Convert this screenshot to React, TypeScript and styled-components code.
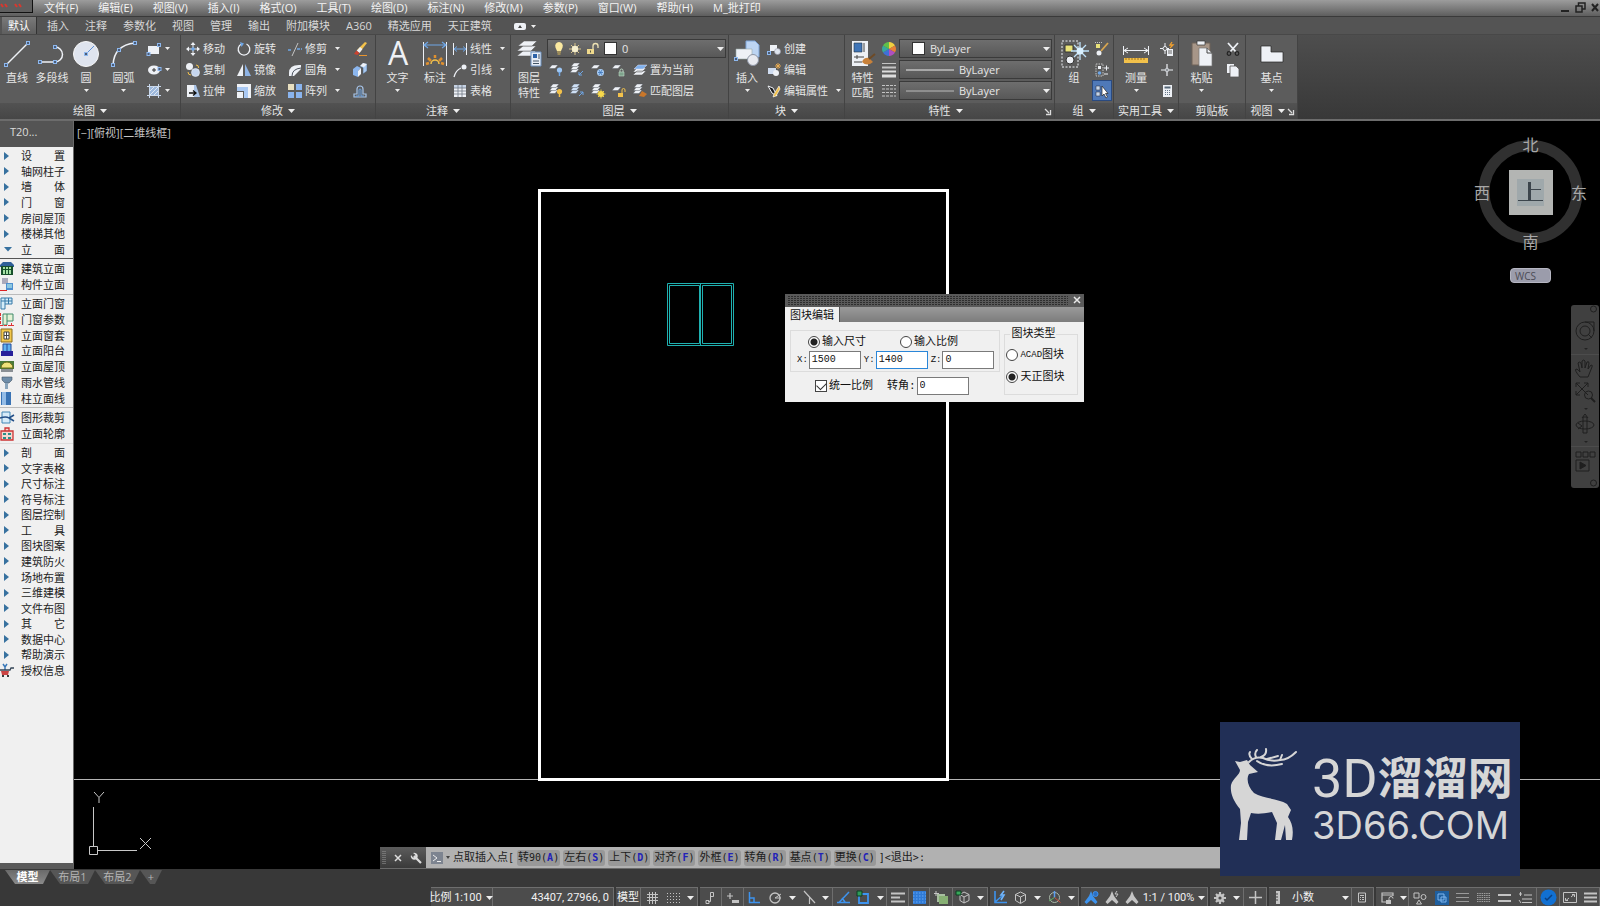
import React from 'react';
import styled, { createGlobalStyle, css } from 'styled-components';

const ui = `'Open Sans', 'Noto Sans CJK SC', sans-serif`;
const mono = `'DejaVu Sans Mono', 'Noto Sans CJK SC', monospace`;
const song = `'Liberation Mono', 'Noto Sans CJK SC', monospace`;
const narrow = `Roboto, 'Noto Sans CJK SC', sans-serif`;

const GlobalStyle = createGlobalStyle`
  * { box-sizing: border-box; }
  body { margin: 0; background: #383838; font-family: ${ui}; font-size: 11px; overflow: hidden; }
  button, select, input { font: inherit; color: inherit; }
  button { background: none; border: 0; padding: 0; margin: 0; }
  ul { list-style: none; margin: 0; padding: 0; }
`;

/* ---------- shared ---------- */
const Svg = styled.svg`
  display: block;
  flex: none;
  overflow: visible;
`;
const W = '#eef1f6';
const B = '#6ea6e6';
const Y = '#f2c14b';
const G = '#c4c4c4';
const SB = '#3d93ee';

const Sheet = ({ x = 0, y = 0, f = W }: { x?: number; y?: number; f?: string }) => (
  <path d={`M${x + 3} ${y}h6l-3 3.500h-6z`} fill={f} stroke="#4a4f57" strokeWidth=".4" />
);
const Stack = ({ f = W }: { f?: string }) => (
  <g>
    <Sheet y={6} x={0} f={f} />
    <Sheet y={3} x={0.5} f={f} />
    <Sheet y={0} x={1} f={f} />
  </g>
);
const Node = ({ x, y }: { x: number; y: number }) => (
  <rect x={x - 1.5} y={y - 1.5} width="3" height="3" fill="#4c5d78" stroke="#8db8ef" strokeWidth="1" />
);
const Man = ({ c }: { c: string }) => (
  <path d="M7 0l2 5 4.500 6-2 2L7 9l-4.500 4-2-2L5 5z" fill={c} />
);

type Art = [number, number, React.ReactNode];
const art: Record<string, Art> = {
  line: [26, 26, <><path d="M2 24L24 2" stroke={W} strokeWidth="1.500" /><Node x={2} y={24} /><Node x={24} y={2} /></>],
  pline: [26, 26, <><path d="M1 21h15a7.500 7.500 0 0 0 0-15" fill="none" stroke={W} strokeWidth="1.500" /><Node x={1} y={21} /><Node x={16} y={21} /><Node x={16} y={6} /></>],
  circle: [26, 26, <><circle cx="13" cy="13" r="12.500" fill="#dfe4ee" stroke="#f8f8f8" /><path d="M13 13l8-8" stroke="#5a8fd8" strokeWidth="1" /><Node x={13} y={13} /></>],
  arc: [26, 26, <><path d="M2 24Q3 4 24 2" fill="none" stroke={W} strokeWidth="1.500" /><Node x={2} y={24} /><Node x={8} y={9} /><Node x={24} y={2} /></>],
  rect: [14, 14, <><path d="M1 4h11v8H1z" fill={W} /><Node x={1.500} y={12} /><Node x={12} y={3} /></>],
  ellipse: [14, 14, <><ellipse cx="7" cy="7" rx="6" ry="4.500" fill={W} /><path d="M7 5v4M5 7h4" stroke="#333" /><Node x={12.500} y={6} /></>],
  hatch: [14, 14, <><path d="M3 3h8v8H3z" fill="#9db8dc" /><path d="M3 7l4-4M3 11l8-8M7 11l4-4" stroke={W} strokeWidth=".8" /><path d="M2.500 0v14M11.500 0v14M0 2.500h14M0 11.500h14" stroke="#c9d8ec" strokeWidth="1" /></>],
  move: [14, 14, <><path d="M7 0l2.500 3h-5zM7 14l2.500-3h-5zM0 7l3-2.500v5zM14 7l-3-2.500v5z" fill={W} /><path d="M7 3v8M3 7h8" stroke={W} /><circle cx="7" cy="7" r="1.800" fill={B} /></>],
  rotate: [14, 14, <><path d="M4.500 2A5.800 5.800 0 1 0 9.500 2" fill="none" stroke={W} strokeWidth="1.300" /><path d="M3 0l4 1.500L4.500 5z" fill={B} /></>],
  trim: [14, 14, <><path d="M0 8h4M9 7h5" stroke={B} strokeWidth="1.300" strokeDasharray="3 1" /><path d="M4 14L10 1" stroke={G} strokeWidth="1" /></>],
  erase: [14, 14, <><path d="M12 0l2 1-7 9-3-2z" fill={Y} /><path d="M7 5l2.500 2-3 4-3-2z" fill={W} /><path d="M3.500 8.500l3 2.500-2 2-3.500-1z" fill="#c9422f" /><path d="M6 13.500h8" stroke="#e9952f" /></>],
  copy: [14, 14, <><circle cx="3.500" cy="3.500" r="3.500" fill={W} /><circle cx="9.500" cy="9.500" r="4" fill="#c6d6ee" stroke={W} strokeWidth=".6" /><path d="M10 2q3 0 2.500 3M2 9q0 3 3 3" stroke={Y} fill="none" /></>],
  mirror: [14, 14, <><path d="M6 1v12H0z" fill={W} /><path d="M8 1v12h6z" fill="#8fb4e6" /></>],
  fillet: [14, 14, <><path d="M1 13V10Q1 2 11 2h2v4l-7 7z" fill={W} /><path d="M4 13Q4 6 13 5" fill="none" stroke="#4c535e" /></>],
  explode: [14, 14, <><path d="M0 6l4-3 4 2-3 3zM0 6l5 2v6l-5-2z" fill="#8bb6ee" /><path d="M5 8l3-3v6l-3 3z" fill={W} /><path d="M7 3l3-3 4 1v7l-4 3V5z" fill="#a5c8f2" stroke="#456" strokeWidth=".5" /><path d="M7 3l3-3 4 1-3 3z" fill={W} /></>],
  stretch: [14, 14, <><path d="M1 1h7v12H1z" fill={W} /><path d="M8 1l2 0 4 12H8z" fill="#a9c3e6" /><path d="M3 9h6M7 6.500L10 9l-3 2.500" stroke="#111" fill="none" strokeWidth="1.300" /></>],
  scale: [14, 14, <><path d="M0 0h14v14H7V7H0z" fill="#a9c8f2" /><path d="M0 0h14v14h-3V3H0z" fill={W} /><path d="M0 8h6v6H0z" fill={W} /></>],
  array: [14, 14, <><path d="M0 0h6v6H0z" fill="#e8dfc0" /><path d="M8 0h6v6H8zM0 8h6v6H0zM8 8h6v6H8z" fill="#8ab4ee" /></>],
  offset: [14, 14, <><path d="M1 13v-3h3V5a3 3 0 0 1 6 0v5h3v3z" fill="none" stroke="#a7c5ea" strokeWidth="1.200" /><path d="M3 13v-1h3V6a1 1 0 0 1 2 0v6h3" fill="none" stroke={B} /></>],
  text: [22, 26, <text x="11" y="24" textAnchor="middle" fontSize="32" fontFamily="Open Sans" fill={W}>A</text>],
  dim: [24, 26, <><path d="M.5 1v24M23.500 1v24" stroke={W} /><path d="M1 4h22M5 1L1 4l4 3M19 1l4 3-4 3" stroke={B} fill="none" strokeWidth="1.200" /><path d="M8 23a4 4 0 0 1 8 0" fill="none" stroke={Y} strokeWidth="1.500" /><path d="M3 23l3-1M5 17l3 3M12 14v3M19 17l-3 3M21 23l-3-1" stroke="#e0902e" strokeWidth="2.500" /></>],
  linear: [14, 14, <><path d="M.5 1v12M13.500 1v12" stroke={W} /><path d="M1 7h12M4 4.500L1 7l3 2.500M10 4.500L13 7l-3 2.500" stroke={B} fill="none" /></>],
  leader: [14, 14, <><path d="M1 14Q3 7 8 5" stroke={W} fill="none" strokeWidth="1.300" /><circle cx="11" cy="4" r="2.500" fill={W} /></>],
  table: [14, 14, <><path d="M1 1h12v12H1z" fill={W} /><path d="M1 1h12v3H1z" fill="#c6d3e4" /><path d="M1 4h12M1 7h12M1 10h12M5 1v12M9 1v12" stroke="#6f7986" strokeWidth=".8" /></>],
  layers: [26, 28, <><path d="M7 11h13l-5 5H1z" fill={W} stroke="#555" strokeWidth=".5" /><path d="M7 6h13l-5 5H1z" fill={W} stroke="#555" strokeWidth=".5" /><path d="M8 1h13l-5 5H2z" fill={W} stroke="#555" strokeWidth=".5" /><path d="M15 12h10v14H15z" fill="#e8edf5" stroke="#6f93c2" /><path d="M17 14h4v4h-4z" fill="#2d62a8" /><path d="M17 21h6M17 23.500h6M23 14v5" stroke="#456" /></>],
  bulb: [10, 13, <><path d="M5 0a4 4 0 0 1 3.500 5.500L7 9H3L1.500 5.500A4 4 0 0 1 5 0z" fill="#fbe9a0" /><path d="M3 10h4M3.500 12h3" stroke="#d9b95a" /></>],
  sun: [12, 12, <><path d="M6 0v12M0 6h12M2 2l8 8M10 2l-8 8" stroke="#d8c48a" strokeWidth="1" /><circle cx="6" cy="6" r="3.200" fill="#f6efcf" /></>],
  unlock: [13, 12, <><path d="M1 6h7v5H1z" fill="#efd98c" /><path d="M7 6V3a2.500 2.500 0 0 1 5 0v2" fill="none" stroke="#efe3b4" strokeWidth="1.300" /><path d="M4.500 7.500v2" stroke="#554" /></>],
  lay1: [14, 14, <><Sheet x={0} y={2} /><circle cx="10.500" cy="7" r="2.600" fill="#9cc6f4" /><path d="M10.500 9v4" stroke={B} strokeWidth="1.500" /></>],
  lay2: [14, 14, <><Stack /><path d="M13 8l-4 4M9 9v3h3" stroke={B} fill="none" /></>],
  lay3: [14, 14, <><Sheet x={0} y={2} /><circle cx="9.500" cy="9.500" r="3.500" fill="#a9cdf5" /><path d="M7 9.500h5M8 7l3 5M11 7l-3 5" stroke="#3c74b8" strokeWidth=".8" /></>],
  lay4: [14, 14, <><Sheet x={0} y={2} /><path d="M7 9h5v4H7z" fill="#7ea38c" stroke="#bcd6c4" strokeWidth=".6" /><path d="M8 9V7.500a1.500 1.500 0 0 1 3 0V9" fill="none" stroke="#bcd6c4" /></>],
  lay5: [14, 14, <><path d="M4 8h9l-4 4H0zM4 5h9l-4 4H0z" fill={W} stroke="#555" strokeWidth=".5" /><path d="M5 2h9l-4 4H1z" fill="#7fb0ec" stroke="#dde" strokeWidth=".5" /></>],
  lay6: [14, 14, <><Stack /><circle cx="10.500" cy="7.500" r="2.600" fill={Y} /><path d="M10.500 9v4" stroke={Y} strokeWidth="1.500" /></>],
  lay7: [14, 14, <><Stack f="#cfe0f5" /><path d="M9 12l4-4M10 8h3v3" stroke={B} fill="none" /></>],
  lay8: [14, 14, <><Stack /><circle cx="10" cy="10" r="3" fill="#f7d94c" /><path d="M10 5.500v9M5.500 10h9M7 7l6 6M13 7l-6 6" stroke="#f7d94c" strokeWidth=".9" /></>],
  lay9: [14, 14, <><Sheet x={0} y={3} /><path d="M6 9h5v4H6z" fill={Y} /><path d="M10 9V6a1.500 1.500 0 0 1 3 0v2" fill="none" stroke={Y} /></>],
  lay10: [14, 14, <><Stack /><path d="M9 7l5 3-3 3-5-1z" fill="#c9772b" /></>],
  insert: [26, 28, <><path d="M12 1h9l4 4v12H12z" fill="#bcd4f2" stroke="#7fa5d8" /><path d="M2 9h16v10H2z" fill={W} stroke="#9aa" strokeWidth=".6" /><circle cx="19" cy="20" r="5.500" fill="#e8eaf0" stroke="#8d95a5" /><Node x={2} y={19} /></>],
  create: [14, 14, <><path d="M3 3h7v6H3z" fill={W} /><circle cx="10.500" cy="9.500" r="3" fill="#dfe5ee" stroke="#99a" strokeWidth=".6" /><Node x={2} y={11} /></>],
  editb: [14, 14, <><path d="M1 5h8v6H1z" fill="#cfdcf0" /><circle cx="9" cy="10" r="3" fill={W} /><path d="M11 0v6M8 3h6M9 1l4 4M13 1L9 5" stroke="#f0b050" strokeWidth=".9" /></>],
  attr: [14, 14, <><path d="M1 2l5 2 4 8-5-3z" fill="#1e1e1e" stroke={W} /><path d="M12 2L7 10l-1 3 3-1 4-7z" fill={Y} stroke="#fff" strokeWidth=".6" /></>],
  match: [26, 28, <><path d="M2 1h16v25H2z" fill={W} /><path d="M4 3h8v9H4z" fill="#3f75b8" stroke="#234" strokeWidth=".6" /><path d="M14 3v9M4 17h10M7 15v4M4 22h8" stroke="#444" /><path d="M12 22q2-5 7-4l4 4q-6 5-11 0z" fill="#c8813a" /><path d="M19 19l6-5" stroke="#6d4a26" strokeWidth="2" /></>],
  wheel: [14, 14, <><path d="M7 7V0a7 7 0 0 1 6 3.500z" fill="#f0d040" /><path d="M7 7l6-3.500a7 7 0 0 1 0 7z" fill="#e88038" /><path d="M7 7l6 3.500A7 7 0 0 1 7 14z" fill="#b04fc0" /><path d="M7 7v7a7 7 0 0 1-6-3.500z" fill="#3f70d8" /><path d="M7 7l-6 3.500a7 7 0 0 1 0-7z" fill="#38a8a0" /><path d="M7 7L1 3.500A7 7 0 0 1 7 0z" fill="#5fc04a" /></>],
  weight: [14, 14, <><path d="M0 .5h14" stroke={G} /><path d="M0 4.500h14" stroke={G} strokeWidth="2" /><path d="M0 8.500h14" stroke="#ddd" strokeWidth="2" /><path d="M0 13h14" stroke="#ddd" strokeWidth="3" /></>],
  ltype: [14, 14, <path d="M0 1.500h14M0 5h14M0 8.500h14M0 12h14" stroke={G} strokeDasharray="3 1" />],
  group: [26, 28, <><path d="M1 1h16v26H1z" fill="none" stroke={W} strokeDasharray="2 1.500" /><path d="M4 5h8v7H4z" fill="#e9e27a" stroke="#333" /><circle cx="9" cy="20" r="4" fill={W} stroke="#333" /><path d="M19 2v18M10 11h18M13 5l12 12M25 5L13 17" stroke="#bfe2fb" strokeWidth="1.300" /><circle cx="19" cy="11" r="3.500" fill="#d9f0ff" /></>],
  gedit: [14, 14, <><path d="M1 2h4v4H1z" fill="#e9e27a" /><circle cx="4" cy="11" r="2.500" fill={W} /><path d="M6 9l7-8" stroke="#d8a650" strokeWidth="1.800" /><path d="M0 .5h8" stroke={G} strokeDasharray="1 1" /></>],
  gadd: [14, 14, <><path d="M1 1h7v12H1z" fill="none" stroke={G} strokeDasharray="1.500 1" /><path d="M3 3h3v3H3z" fill={W} /><circle cx="4.500" cy="10" r="1.800" fill={B} /><path d="M9 5h5M11.500 2.500v5M9 11h4" stroke={W} /></>],
  gsel: [14, 14, <><path d="M1 2h4v4H1zM1 8h4v4H1z" fill="#c6d6ea" stroke="#223" strokeWidth=".5" /><path d="M7 2v10l2-2 2 4 1.500-1-2-3.500H13z" fill="#fff" stroke="#222" strokeWidth=".7" /></>],
  measure: [26, 26, <><path d="M.5 5v9M25.500 5v9M1 9.500h24M5 7L1 9.500 5 12M21 7l4 2.500-4 2.500" stroke={W} fill="none" /><path d="M1 17h24v5H1z" fill={Y} /><path d="M3 17v2M6 17v2M9 17v2M12 17v2M15 17v2M18 17v2M21 17v2" stroke="#a67418" /></>],
  quick: [14, 14, <><path d="M5 1v11M0 6.500h9" stroke={W} /><circle cx="5" cy="6.500" r="2" fill="#5d5d5d" stroke={W} /><path d="M7 7h6v7H7z" fill={W} /><path d="M8 9h4M8 11h4" stroke="#666" /><path d="M12 0l-2 3h3l-3 3" stroke="#f0a030" fill="none" strokeWidth="1.300" /></>],
  point: [14, 14, <><path d="M7 1v12M1 7h12" stroke={W} strokeWidth="1.200" /><circle cx="7" cy="7" r="1.800" fill="#8f9499" stroke={W} strokeWidth=".6" /></>],
  calc: [14, 14, <><path d="M3 1h9v12H3z" fill={W} /><path d="M4.500 2.500h6v2h-6z" fill="#567" /><path d="M5 6.500h5M5 8.500h5M5 10.500h5" stroke="#678" strokeDasharray="1 1" /></>],
  paste: [26, 28, <><path d="M3 3h18v22H3z" fill="#a79688" stroke="#6f6258" /><path d="M8 1h8v4H8z" fill={W} stroke="#333" strokeWidth=".7" /><path d="M10 8h8l5 5v13H10z" fill={W} stroke="#777" strokeWidth=".7" /><path d="M18 8v5h5" fill="none" stroke="#444" /></>],
  cut: [14, 14, <><path d="M2 1l8 9M12 1L4 10" stroke={W} strokeWidth="1.800" /><circle cx="3" cy="11.500" r="1.800" fill="none" stroke="#222" strokeWidth="1.200" /><circle cx="11" cy="11.500" r="1.800" fill="none" stroke="#222" strokeWidth="1.200" /></>],
  copyc: [14, 14, <><path d="M1 1h7v9H1z" fill={W} /><path d="M4 3h6l3 3v8H4z" fill={W} stroke="#555" strokeWidth=".8" /></>],
  base: [26, 26, <path d="M2 5h10v6h12v10H2z" fill={W} stroke="#222" strokeWidth=".7" />],

  grid: [12, 12, <path d="M2.500 0v12M5.500 0v12M8.500 0v12M0 2.500h11M0 5.500h11M0 8.500h11" stroke={G} strokeWidth="1" />],
  dots: [13, 12, <path d="M0 1.500h13M0 4.500h13M0 7.500h13M0 10.500h13" stroke={G} strokeDasharray="1 2" />],
  infer: [10, 13, <path d="M3 10.500h2.500V1.500h3v4h-3M1 9.500h3v3H1z" stroke={G} fill="none" />],
  dyn: [14, 12, <><path d="M1 4h6M4 1v6" stroke={G} strokeWidth="1.200" /><path d="M6 8h7v3H6z" fill={G} /></>],
  ortho: [12, 12, <path d="M1.500 0v10.500H12M1.500 6h4.500v4.500" stroke={SB} fill="none" strokeWidth="1.500" />],
  polar: [13, 13, <><circle cx="6" cy="7" r="5" fill="none" stroke={G} strokeWidth="1.300" /><path d="M6 7l6-4M6 7h6" stroke={G} /></>],
  iso: [13, 13, <path d="M1 0l11 12M6.500 6V13" stroke={G} strokeWidth="1.200" />],
  otrack: [13, 13, <path d="M12 1L2 11.500M0 11.500h13M5 7l3 4" stroke={SB} strokeWidth="1.500" />],
  osnap: [13, 13, <><path d="M2 3h9v9H2z" stroke={SB} fill="none" strokeWidth="1.800" /><path d="M0 0h5v5H0z" fill="#2f9a5a" stroke="#0c3c20" /></>],
  lwt: [14, 12, <path d="M0 1.500h14M0 5.500h9M0 9.500h14" stroke={G} strokeWidth="2" />],
  trans: [13, 13, <><path d="M0 0h13v13H0z" fill="#2f7ad6" /><path d="M0 2h13M0 5h13M0 8h13M0 11h13" stroke="#6aaaf4" strokeDasharray="1.500 1.500" /></>],
  cyc: [14, 13, <><path d="M5 5h9v8H5z" fill="#87b074" /><path d="M3 3h8v2H5v6H3z" fill="#a8bfa0" /><path d="M2 0v5M0 2.500h5" stroke={G} /></>],
  osnap3: [15, 13, <><path d="M8 1l5 2.500v6L8 12 4 9.500v-6zM4 3.500L8 6l5-2.500M8 6v6" stroke={G} fill="none" /><path d="M0 0h5v4H0z" fill="#38a85a" stroke="#0c3c20" /></>],
  ducs: [13, 13, <><path d="M1 0v11.500h12M1 11l7-6" stroke={SB} fill="none" strokeWidth="1.600" /><path d="M10 0L7 4h3L7 9" stroke="#6fb6ff" fill="none" strokeWidth="1.600" /></>],
  cube: [13, 13, <path d="M6.500 1l5 2.500v6l-5 3-5-3v-6zM1.500 3.500l5 2.500 5-2.500M6.500 6v6" stroke={G} fill="none" />],
  gizmo: [13, 13, <><circle cx="6.500" cy="6.500" r="5" stroke="#a9b9a9" fill="none" /><path d="M6.500 0v6.500" stroke="#5a9cf0" strokeWidth="1.500" /><path d="M6.500 6.500l6 5" stroke="#d04a3a" /><path d="M6.500 6.500L1 10" stroke="#5fb05f" /></>],
  man1: [14, 13, <><Man c={SB} /><circle cx="11.500" cy="3" r="2.500" fill="#2b6fc4" stroke={SB} /></>],
  man2: [14, 13, <><Man c={G} /><path d="M12 0l-2 3h3l-2 3" stroke={G} fill="none" /></>],
  man3: [14, 13, <Man c={G} />],
  gear: [12, 12, <><path d="M6 0v12M0 6h12M2 2l8 8M10 2l-8 8" stroke={G} strokeWidth="2.200" /><circle cx="6" cy="6" r="4" fill={G} /><circle cx="6" cy="6" r="1.600" fill="#4c4c4c" /></>],
  plus: [13, 13, <path d="M6.500 0v13M0 6.500h13" stroke={G} strokeWidth="1.500" />],
  ruler: [6, 13, <><path d="M1 0h4v13H1z" fill={G} /><path d="M1 3h2M1 6h2M1 9h2" stroke="#444" /></>],
  scalc: [8, 11, <path d="M.5 1h7v9h-7zM2 3.500h4M2 5.500h1M4 5.500h2M2 7.500h1M4 7.500h2" stroke={G} fill="none" />],
  lockui: [14, 12, <><path d="M6 10H2V1h11v3M2 3h11" stroke={G} fill="none" strokeWidth="1.200" /><path d="M6 8h5v4H6z" fill={G} /><path d="M9 8V6.500a2 2 0 0 1 4 0" stroke={G} fill="none" /></>],
  isol: [14, 12, <><path d="M1 1h5v5H1zM6 8l2.500 4h-5z" stroke={G} fill="none" /><circle cx="10.500" cy="5" r="2.500" stroke={G} fill="none" /></>],
  perf: [14, 14, <><path d="M0 0h14v14H0z" fill="#1f5f9f" /><path d="M3 3h6v6H3zM6 6h5v5H6z" stroke="#7fb6ee" fill="none" /></>],
  l3: [13, 11, <path d="M0 1.500h13M0 5.500h13M0 9.500h13" stroke="#9a9a9a" />],
  hz: [13, 9, <path d="M0 .5h13M0 2.500h13M0 4.500h13M0 6.500h13M0 8.500h13" stroke="#9f9f9f" strokeDasharray="1.500 .8" />],
  l2: [13, 10, <path d="M0 2h13M0 8h13" stroke={G} strokeWidth="2" />],
  lst: [14, 12, <path d="M1 2h3M2.500 0v4M6 3h8M4 7h10M4 10.500h10M1 8l2 3" stroke={G} />],
  disc: [17, 17, <><circle cx="8.500" cy="8.500" r="8" fill="#1170d2" /><path d="M5 9l2 2 5-5" stroke="#0a3f80" fill="none" strokeWidth="1.500" /></>],
  full: [14, 11, <><path d="M.5.5h13v10H.5z" stroke={G} fill="none" /><path d="M8 5l3-2.500M9 2.500h2.500V5M6 6L3 8.500M2.500 6v2.500H5" stroke={G} fill="none" /></>],
  menu: [13, 11, <path d="M0 1.500h13M0 5.500h13M0 9.500h13" stroke={G} strokeWidth="1.800" />],

  sbuild: [14, 13, <><path d="M0 3l3-3h8l3 3v2H0z" fill="#2e5f98" /><path d="M1 4h12v9H1z" fill="#174f2b" /><path d="M3 5h2v2H3zM6 5h2v2H6zM9 5h2v2H9zM3 8h2v4H3zM6 8h2v4H6zM9 8h2v4H9z" fill="#a4e0a4" /></>],
  scomp: [14, 13, <><path d="M2 0h6v6H2z" fill="#aab" /><path d="M6 5h7v7H6z" fill="#4d8fd0" /><path d="M7 7h5M7 9h5" stroke="#cfe" /><path d="M0 12.500h7" stroke="#d22" /></>],
  sdoor: [13, 13, <path d="M1 1h11v6H5v5H1zM5 1v6M8.500 1v6M1 4h11" fill="#d4ecf8" stroke="#3579a8" />],
  sparam: [14, 13, <><path d="M3 1h10v7H7v4H3zM7 1v7" fill="#e4f1d4" stroke="#3f8a6a" /><path d="M.5 0v13M0 12.500h14M11.500 10v3" stroke="#d33" strokeDasharray="3 1" /></>],
  swin: [13, 13, <><path d="M1 0h11v13H1z" fill="#f2c84c" stroke="#8a6a1a" /><path d="M4 3h5v7H4zM6.500 3v7M4 6.500h5" fill="#fff" stroke="#444" /></>],
  sbal: [14, 13, <><path d="M3 0h8v8H3z" fill="#5fb2f0" stroke="#234a9a" /><path d="M7 0v8" stroke="#234a9a" /><path d="M1 7h12v5H1z" fill="#27209a" /></>],
  sroof: [14, 13, <><path d="M0 1h14v8H0z" fill="#4a7a3a" /><path d="M1 8a6 6 0 0 1 12 0z" fill="#f0e27a" stroke="#6a6a1a" /><path d="M1 9h12v3H1z" fill="#8a8f94" /></>],
  spipe: [14, 13, <><path d="M2 1h10v3l-3 3H5L2 4z" fill="#6f8da8" stroke="#456" strokeWidth=".6" /><path d="M5 7h3v6H5z" fill="#8aa5bb" /></>],
  scol: [12, 13, <><path d="M1 0h10v13H1z" fill="#3a73b4" /><path d="M2 0h4v13H2z" fill="#94bce6" /></>],
  sclip: [14, 13, <><path d="M2 1h8v11H2z" fill="#d6ebf9" stroke="#4186b5" /><path d="M0 7q6-2 9 0l5-3M9 7l5 3" stroke="#234f88" fill="none" strokeWidth="1.500" /></>],
  sout: [14, 13, <><path d="M1 4h12v9H1zM5 4V1h4v3" fill="#f4d8d0" stroke="#c33" strokeWidth="1.300" /><path d="M3 6h3v2H3zM8 6h3v2H8zM3 10h3v2H3zM8 10h3v2H8z" fill="#2c8f8a" /></>],
  scart: [14, 13, <><path d="M3 0l2 3 2-3M5 3v3" stroke="#3a78b8" fill="none" strokeWidth="1.500" /><path d="M0 6h10l1-2h3" stroke="#345" fill="none" strokeWidth="1.300" /><path d="M1 7h8l-1 4H2z" fill="#c44" /><circle cx="3" cy="12" r="1" /><circle cx="8" cy="12" r="1" /></>],
  tri: [6, 8, <path d="M0 0l5 4-5 4z" fill="#37719f" />],
  trid: [8, 6, <path d="M0 1h8L4 5.500z" fill="#37719f" />],
};

const Icon = ({ n }: { n: string }) => {
  const [w, h, d] = art[n];
  return <Svg width={w} height={h} viewBox={`0 0 ${w} ${h}`} aria-hidden="true">{d}</Svg>;
};
const Caret = ({ big }: { big?: boolean }) => (
  <Svg width={big ? 7 : 5} height={big ? 4 : 3} viewBox="0 0 7 4" aria-hidden="true"><path d="M0 0h7L3.500 4z" fill="#eee" /></Svg>
);

/* ---------- frame ---------- */
const Page = styled.div`
  position: relative;
  display: flex;
  flex-direction: column;
  min-height: 100vh;
  color: #e6e6e6;
  line-height: 14px;
`;
const MenuBar = styled.nav`
  display: flex;
  align-items: center;
  height: 17px;
  padding-bottom: 1px;
  background: linear-gradient(#9c9c9c, #5e5e5e);
  border-bottom: 1px solid #3a3a3a;
`;
const Logo = styled.button`
  align-self: flex-start;
  width: 33px;
  height: 13px;
  margin-right: 11px;
  background: #5f5f5f;
  border: solid #111;
  border-width: 0 1px 1px 0;
`;
const MenuItem = styled.button`
  margin-right: 20px;
  color: #f4f4f4;
  white-space: nowrap;
`;
const WinControls = styled.div`
  display: flex;
  gap: 4px;
  margin-left: auto;
`;
const TabBar = styled.nav`
  display: flex;
  align-items: flex-end;
  height: 18px;
  background: #545454;
  border-bottom: 1px solid #484848;
`;
const Tab = styled.button<{ $on?: boolean }>`
  height: 16px;
  padding: 0 6px;
  margin: 0 2px;
  white-space: nowrap;
  color: #d8d8d8;
  ${p => p.$on && css`
    height: 17px;
    color: #fff;
    background: linear-gradient(#7a7a7a, #5e5e5e);
    border-right: 1px solid #333;
  `}
`;
const TabExtra = styled.button`
  display: flex;
  align-items: center;
  gap: 5px;
  height: 16px;
  margin-left: 14px;
`;

/* ---------- ribbon ---------- */
const Ribbon = styled.header`
  display: flex;
  height: 86px;
  background: linear-gradient(#4e4e4e, #383838);
  border-bottom: 2px solid #6c6c6c;
`;
const Panel = styled.section<{ $w: number }>`
  display: flex;
  flex-direction: column;
  flex: none;
  width: ${p => p.$w}px;
  background: #5c5c5c;
  border-right: 1px solid #434343;
`;
const PanelBody = styled.div`
  display: flex;
  flex: 1;
  padding-top: 3px;
`;
const PanelTitle = styled.h2<{ $launch?: boolean }>`
  position: relative;
  display: flex;
  align-items: center;
  justify-content: center;
  gap: 5px;
  height: 16px;
  margin: 0;
  padding-right: ${p => (p.$launch ? 8 : 0)}px;
  font-size: 11px;
  font-weight: 400;
  background: linear-gradient(#525252, #464646);
`;
const Launcher = styled.button`
  position: absolute;
  right: 3px;
  top: 6px;
`;
const Big = styled.button<{ $w: number }>`
  display: flex;
  flex-direction: column;
  align-items: center;
  flex: none;
  width: ${p => p.$w}px;
  line-height: 15px;
`;
const BigArt = styled.span`
  display: flex;
  align-items: center;
  height: 32px;
`;
const CaretRow = styled.span`
  padding-top: 4px;
`;
const Col = styled.div<{ $w: number }>`
  display: grid;
  grid-template-rows: repeat(3, 21px);
  align-content: start;
  flex: none;
  width: ${p => p.$w}px;
`;
const Small = styled.div`
  display: flex;
  align-items: center;
`;
const SmallBtn = styled.button<{ $on?: boolean }>`
  display: flex;
  align-items: center;
  gap: 3px;
  height: 19px;
  padding: 0 2px;
  white-space: nowrap;
  ${p => p.$on && css`
    background: #4f79b8;
    outline: 1px solid #2a4a80;
  `}
`;
const DropBtn = styled.button<{ $far?: boolean }>`
  padding: 6px 2px;
  margin-left: ${p => (p.$far ? 4 : 0)}px;
`;
const ComboBox = styled.label`
  display: flex;
  align-items: center;
  gap: 5px;
  flex: 1;
  height: 19px;
  padding: 0 1px 0 6px;
  border: 1px solid #3a3a3a;
  background: linear-gradient(#6e6e6e, #585858);
`;
const Select = styled.select`
  flex: 1;
  min-width: 0;
  padding: 0;
  appearance: none;
  background: none;
  border: 0;
  outline: 0;
`;
const Swatch = styled.span`
  width: 13px;
  height: 13px;
  background: #fff;
  border: 1px solid #333;
`;
const LayerArea = styled.div`
  display: grid;
  grid-template-rows: repeat(3, 21px);
  align-content: start;
  align-items: center;
  flex: 1;
  padding-right: 2px;
`;
const LayerRow = styled.div`
  display: flex;
  align-items: center;
  gap: 3px;
`;

const BigButton = ({ w, icon, lines, drop }: { w: number; icon: string; lines: string[]; drop?: boolean }) => (
  <Big $w={w}>
    <BigArt><Icon n={icon} /></BigArt>
    {lines.map(l => <span key={l}>{l}</span>)}
    {drop && <CaretRow><Caret /></CaretRow>}
  </Big>
);
type Item = { icon: string; text?: string; drop?: boolean; on?: boolean };
const Column = ({ w, items }: { w: number; items: Item[] }) => (
  <Col $w={w}>
    {items.map(i => (
      <Small key={i.icon}>
        <SmallBtn $on={i.on} aria-label={i.text ?? i.icon}><Icon n={i.icon} />{i.text}</SmallBtn>
        {i.drop && <DropBtn $far={!!i.text} aria-label="展开"><Caret /></DropBtn>}
      </Small>
    ))}
  </Col>
);
const Group = ({ w, title, plain, launch, children }: { w: number; title: string; plain?: boolean; launch?: boolean; children: React.ReactNode }) => (
  <Panel $w={w}>
    <PanelBody>{children}</PanelBody>
    <PanelTitle $launch={launch}>
      {title}{!plain && <Caret big />}
      {launch && <Launcher aria-label="对话框"><Svg width="6" height="6"><path d="M0 0l4 4M5.500 1v4.500H1" stroke="#ddd" fill="none" strokeWidth="1.300" /></Svg></Launcher>}
    </PanelTitle>
  </Panel>
);

/* ---------- workspace ---------- */
const Workspace = styled.div`
  display: flex;
  flex: 1;
`;
const Side = styled.aside`
  display: flex;
  flex-direction: column;
  flex: none;
  width: 74px;
  background: #f0f0f0;
  border-right: 1px solid #6a6a6a;
  border-bottom: 6px solid #5a5a5a;
  color: #222;
`;
const SideTitle = styled.div`
  height: 26px;
  padding: 4px 10px;
  background: #545454;
  color: #dcdcdc;
`;
const SideGroup = styled.ul<{ $h: number; $line?: string }>`
  display: grid;
  grid-auto-rows: 1fr;
  height: ${p => p.$h}px;
  margin-top: 1px;
  padding-bottom: 1px;
  border-bottom: ${p => (p.$line ? `1px solid ${p.$line}` : '0')};
`;
const SideItem = styled.li`
  display: flex;
  align-items: center;
`;
const SideBtn = styled.button`
  display: grid;
  grid-template-columns: 21px auto;
  align-items: center;
  line-height: 15px;
  white-space: pre;
`;
const Slot = styled.span<{ $in?: boolean }>`
  padding-left: ${p => (p.$in ? 4 : 0)}px;
`;
const Canvas = styled.main`
  position: relative;
  flex: 1;
  background: #000;
  overflow: hidden;
`;
const Drawing = styled.svg`
  position: absolute;
  inset: 0;
  width: 100%;
  height: 100%;
`;
const ViewLabel = styled.div`
  position: absolute;
  left: 3px;
  top: 5px;
  color: #c4c4c4;
`;
const Compass = styled.svg`
  position: absolute;
  right: 9px;
  top: 10px;
`;
const Wcs = styled.button`
  position: absolute;
  right: 49px;
  top: 147px;
  width: 41px;
  height: 15px;
  padding-left: 4px;
  border-radius: 4px;
  background: #9b9cab;
  border: 1px solid #b6b6c2;
  color: #4b4b55;
  font-size: 10px;
  line-height: 12px;
  text-align: left;
`;
const NavBar = styled.svg`
  position: absolute;
  right: 1px;
  top: 184px;
`;
const CommandBar = styled.div`
  position: absolute;
  left: 306px;
  right: 300px;
  bottom: 0;
  display: flex;
  height: 22px;
  border-bottom: 1px solid #6a6a6a;
  background: #b1b1b1;
  color: #1c1c1c;
`;
const CommandGrip = styled.div`
  display: flex;
  align-items: center;
  gap: 8px;
  width: 46px;
  padding-left: 2px;
  background: linear-gradient(#5c5c5c, #3a3a3a);
`;
const CommandText = styled.div`
  display: flex;
  align-items: center;
  gap: 3px;
  padding-left: 5px;
  font-family: ${mono};
`;
const Opt = styled.button`
  display: flex;
  align-items: center;
  height: 16px;
  padding: 0 1px;
  border-radius: 3px;
  background: #989898;
`;
const Latin = styled.span`
  font-size: 10px;
  b { color: #2222b8; }
`;

/* ---------- dialog ---------- */
const Dialog = styled.form`
  position: absolute;
  left: 711px;
  top: 173px;
  width: 299px;
  background: #f0f0f0;
  color: #111;
  font-family: ${song};
  line-height: 12px;
`;
const DlgTitle = styled.div`
  display: flex;
  align-items: center;
  gap: 5px;
  height: 13px;
  padding: 0 2px;
  background: #5a5a5a;
`;
const Grip = styled.span`
  flex: 1;
  height: 9px;
  background:
    repeating-linear-gradient(90deg, #5a5a5a 0 1px, transparent 1px 3px),
    repeating-linear-gradient(#2e2e2e 0 1px, #5a5a5a 1px 2px);
`;
const DlgTabs = styled.div`
  display: flex;
  height: 15px;
  background: linear-gradient(#9a9a9a, #7c7c7c);
`;
const DlgTab = styled.button`
  padding: 2px 5px 0;
  background: #f0f0f0;
  border-right: 1px solid #555;
`;
const DlgBody = styled.div`
  display: flex;
  gap: 4px;
  padding: 5px 6px 7px 5px;
`;
const Box = styled.div`
  margin: 3px 0 5px;
  padding: 5px 5px 2px;
  border: 1px solid #dcdcdc;
`;
const Types = styled.fieldset`
  flex: 1;
  min-width: 0;
  margin: 1px 0 0;
  padding: 9px 1px 4px;
  border: 1px solid #dcdcdc;
  legend { margin-left: 4px; padding: 0 1px; }
  label + label { margin-top: 10px; }
`;
const Line = styled.div<{ $pad: number; $gap: number }>`
  display: flex;
  align-items: center;
  gap: ${p => p.$gap}px;
  padding-left: ${p => p.$pad}px;
  & + & { margin-top: 3px; }
`;
const Check = styled.label`
  display: flex;
  align-items: center;
  gap: 2px;
  white-space: nowrap;
  small { font-size: 9px; }
  span { display: flex; align-items: center; }
  input {
    position: relative;
    appearance: none;
    flex: none;
    width: 12px;
    height: 12px;
    margin: 0;
    border: 1px solid #444;
    background: #fff;
  }
  input[type='radio'] { border-radius: 50%; }
  input[type='radio']:checked { background: radial-gradient(circle, #222 3px, #fff 4px); }
  input[type='checkbox']:checked::before {
    content: '';
    position: absolute;
    left: 1px;
    top: 1px;
    width: 8px;
    height: 5px;
    border: solid #333;
    border-width: 0 0 1px 1px;
    transform: rotate(-45deg);
  }
`;
const Field = styled.label<{ $focus?: boolean }>`
  display: flex;
  align-items: center;
  gap: 1px;
  font-size: 9px;
  span { font-size: 11px; }
  input {
    width: 52px;
    height: 18px;
    padding: 0 2px 2px;
    border: 1px solid ${p => (p.$focus ? '#2a86d8' : '#7a7a7a')};
    background: #fff;
    font-size: 10px;
  }
`;

/* ---------- bottom ---------- */
const LayoutTabs = styled.div`
  display: flex;
  height: 18px;
  padding: 1px 0 0 5px;
`;
const LayoutTab = styled.button<{ $on?: boolean; $w: number }>`
  width: ${p => p.$w}px;
  height: 14px;
  clip-path: polygon(0 0, 100% 0, calc(100% - 7px) 100%, 10px 100%);
  background: ${p => (p.$on ? 'linear-gradient(#6a6a6a, #8a8a8a)' : '#565656')};
  color: ${p => (p.$on ? '#fff' : '#b4b4b4')};
  font-weight: ${p => (p.$on ? 700 : 400)};
`;
const StatusBar = styled.footer`
  display: flex;
  justify-content: flex-end;
  height: 19px;
  font-family: ${narrow};
`;
const Cell = styled.div<{ $w: number; $gap?: boolean }>`
  display: flex;
  flex: none;
  align-items: center;
  width: ${p => p.$w}px;
  margin-left: ${p => (p.$gap ? 2 : 0)}px;
  padding-top: 1px;
  background: #4c4c4c;
  border: solid #6e6e6e;
  border-width: 1px 1px 0 0;
  color: #f2f2f2;
`;
const StatusBtn = styled.button<{ $w: number }>`
  display: flex;
  align-items: center;
  justify-content: center;
  gap: 4px;
  flex: none;
  width: ${p => p.$w}px;
  height: 17px;
  white-space: nowrap;
`;
const Coords = styled.output`
  flex: 1;
  padding-right: 4px;
  text-align: right;
`;
const Watermark = styled.aside`
  position: absolute;
  right: 80px;
  bottom: 30px;
  display: flex;
  width: 300px;
  height: 154px;
  padding: 26px 8px 0 10px;
  gap: 14px;
  background: #212f56;
  color: #d6d6d6;
`;
const Brand = styled.div`
  display: flex;
  flex-direction: column;
  font-family: Inter, 'Noto Sans CJK SC', sans-serif;
`;
const BrandTop = styled.div`
  display: flex;
  align-items: center;
  height: 62px;
  font-size: 45px;
  font-weight: 700;
  white-space: nowrap;
  span { font-family: Roboto, sans-serif; font-size: 54px; font-weight: 400; }
`;
const BrandUrl = styled.div`
  height: 32px;
  font-size: 38px;
  line-height: 30px;
`;

const Cells: { w: number; gap?: boolean; s: [string, number][] }[] = [
  { w: 57, s: [['grid', 23], ['dots', 19], ['v', 14]] },
  { w: 22, gap: true, s: [['infer', 20]] },
  { w: 22, s: [['dyn', 21]] },
  { w: 89, s: [['ortho', 20], ['polar', 22], ['v', 13], ['iso', 20], ['v', 13]] },
  { w: 54, s: [['otrack', 20], ['osnap', 21], ['v', 12]] },
  { w: 22, s: [['lwt', 21]] },
  { w: 21, s: [['trans', 20]] },
  { w: 23, s: [['cyc', 22]] },
  { w: 35, s: [['osnap3', 20], ['v', 14]] },
  { w: 89, gap: true, s: [['ducs', 20], ['cube', 21], ['v', 13], ['gizmo', 20], ['v', 14]] },
];
const Cells2: typeof Cells = [
  { w: 34, gap: true, s: [['gear', 20], ['v', 13]] },
  { w: 23, s: [['plus', 22]] },
];
const Cells3: typeof Cells = [
  { w: 22, s: [['scalc', 20]] },
  { w: 33, gap: true, s: [['lockui', 21], ['v', 12]] },
  { w: 128, s: [['isol', 22], ['perf', 21], ['l3', 21], ['hz', 21], ['l2', 20], ['lst', 21]] },
  { w: 23, s: [['disc', 22]] },
  { w: 40, s: [['full', 20], ['menu', 20]] },
];
const renderCells = (cells: typeof Cells) => cells.map((c, i) => (
  <Cell key={i} $w={c.w} $gap={c.gap}>
    {c.s.map(([n, w], j) => (
      <StatusBtn key={j} $w={w} aria-label={n}>{n === 'v' ? <Caret big /> : <Icon n={n} />}</StatusBtn>
    ))}
  </Cell>
));

const side: { h: number; line?: string; rows: [string, string][] }[] = [
  { h: 111, line: '#555', rows: [['tri', '设　　置'], ['tri', '轴网柱子'], ['tri', '墙　　体'], ['tri', '门　　窗'], ['tri', '房间屋顶'], ['tri', '楼梯其他'], ['trid', '立　　面']] },
  { h: 35, line: '#bbb', rows: [['sbuild', '建筑立面'], ['scomp', '构件立面']] },
  { h: 112, line: '#bbb', rows: [['sdoor', '立面门窗'], ['sparam', '门窗参数'], ['swin', '立面窗套'], ['sbal', '立面阳台'], ['sroof', '立面屋顶'], ['spipe', '雨水管线'], ['scol', '柱立面线']] },
  { h: 35, line: '#ddd', rows: [['sclip', '图形裁剪'], ['sout', '立面轮廓']] },
  { h: 234, rows: ['剖　　面', '文字表格', '尺寸标注', '符号标注', '图层控制', '工　　具', '图块图案', '建筑防火', '场地布置', '三维建模', '文件布图', '其　　它', '数据中心', '帮助演示'].map(t => ['tri', t] as [string, string]).concat([['scart', '授权信息']]) },
];
const options = [['转', '90(', 'A'], ['左右', '(', 'S'], ['上下', '(', 'D'], ['对齐', '(', 'F'], ['外框', '(', 'E'], ['转角', '(', 'R'], ['基点', '(', 'T'], ['更换', '(', 'C']];

export default function App() {
  return (
    <Page>
      <GlobalStyle />
      <MenuBar>
        <Logo aria-label="应用程序菜单"><Svg width="26" height="4"><path d="M1 0l2 3M5 0l2 3M15 0l2 3M19 0l2 3" stroke="#d8382f" strokeWidth="2" /></Svg></Logo>
        {['文件(F)', '编辑(E)', '视图(V)', '插入(I)', '格式(O)', '工具(T)', '绘图(D)', '标注(N)', '修改(M)', '参数(P)', '窗口(W)', '帮助(H)', 'M_批打印'].map(m => <MenuItem key={m}>{m}</MenuItem>)}
        <WinControls>
          <button aria-label="最小化"><Svg width="11" height="11"><path d="M1 9h8" stroke="#222" strokeWidth="2" /></Svg></button>
          <button aria-label="还原"><Svg width="11" height="11"><path d="M1 4h6v6H1zM3.500 4V1H10v6H7" stroke="#222" fill="none" strokeWidth="1.500" /></Svg></button>
          <button aria-label="关闭"><Svg width="10" height="11"><path d="M2 2l6 7M8 2L2 9" stroke="#222" strokeWidth="2" /></Svg></button>
        </WinControls>
      </MenuBar>
      <TabBar>
        {['默认', '插入', '注释', '参数化', '视图', '管理', '输出', '附加模块', 'A360', '精选应用', '天正建筑'].map((t, i) => <Tab key={t} $on={i === 0}>{t}</Tab>)}
        <TabExtra aria-label="最小化功能区"><Svg width="12" height="7"><rect width="12" height="7" rx="2" fill={W} /><path d="M4 5h4L6 2z" fill="#444" /></Svg><Caret /></TabExtra>
      </TabBar>

      <Ribbon>
        <Group w={181} title="绘图">
          <BigButton w={34} icon="line" lines={['直线']} />
          <BigButton w={36} icon="pline" lines={['多段线']} />
          <BigButton w={32} icon="circle" lines={['圆']} drop />
          <BigButton w={43} icon="arc" lines={['圆弧']} drop />
          <Column w={34} items={[{ icon: 'rect', drop: true }, { icon: 'ellipse', drop: true }, { icon: 'hatch', drop: true }]} />
        </Group>
        <Group w={195} title="修改">
          <Column w={3} items={[]} />
          <Column w={51} items={[{ icon: 'move', text: '移动' }, { icon: 'copy', text: '复制' }, { icon: 'stretch', text: '拉伸' }]} />
          <Column w={51} items={[{ icon: 'rotate', text: '旋转' }, { icon: 'mirror', text: '镜像' }, { icon: 'scale', text: '缩放' }]} />
          <Column w={65} items={[{ icon: 'trim', text: '修剪', drop: true }, { icon: 'fillet', text: '圆角', drop: true }, { icon: 'array', text: '阵列', drop: true }]} />
          <Column w={20} items={[{ icon: 'erase' }, { icon: 'explode' }, { icon: 'offset' }]} />
        </Group>
        <Group w={135} title="注释">
          <BigButton w={43} icon="text" lines={['文字']} drop />
          <BigButton w={32} icon="dim" lines={['标注']} />
          <Column w={58} items={[{ icon: 'linear', text: '线性', drop: true }, { icon: 'leader', text: '引线', drop: true }, { icon: 'table', text: '表格' }]} />
        </Group>
        <Group w={218} title="图层">
          <BigButton w={36} icon="layers" lines={['图层', '特性']} />
          <LayerArea>
            <ComboBox>
              <Icon n="bulb" /><Icon n="sun" /><Icon n="unlock" /><Swatch />
              <Select aria-label="图层"><option>0</option></Select><Caret big />
            </ComboBox>
            <LayerRow>
              {['lay1', 'lay2', 'lay3', 'lay4'].map(n => <SmallBtn key={n} aria-label={n}><Icon n={n} /></SmallBtn>)}
              <SmallBtn><Icon n="lay5" />置为当前</SmallBtn>
            </LayerRow>
            <LayerRow>
              {['lay6', 'lay7', 'lay8', 'lay9'].map(n => <SmallBtn key={n} aria-label={n}><Icon n={n} /></SmallBtn>)}
              <SmallBtn><Icon n="lay10" />匹配图层</SmallBtn>
            </LayerRow>
          </LayerArea>
        </Group>
        <Group w={116} title="块">
          <BigButton w={36} icon="insert" lines={['插入']} drop />
          <Column w={78} items={[{ icon: 'create', text: '创建' }, { icon: 'editb', text: '编辑' }, { icon: 'attr', text: '编辑属性', drop: true }]} />
        </Group>
        <Group w={210} title="特性" launch>
          <BigButton w={35} icon="match" lines={['特性', '匹配']} />
          <Column w={19} items={[{ icon: 'wheel' }, { icon: 'weight' }, { icon: 'ltype' }]} />
          <LayerArea>
            <ComboBox><Svg width="1" height="1" /><Swatch /><Select aria-label="对象颜色"><option>ByLayer</option></Select><Caret big /></ComboBox>
            <ComboBox><Svg width="48" height="2"><path d="M0 1h48" stroke="#eee" /></Svg><Select aria-label="线宽"><option>ByLayer</option></Select><Caret big /></ComboBox>
            <ComboBox><Svg width="48" height="2"><path d="M0 1h48" stroke="#bbb" /></Svg><Select aria-label="线型"><option>ByLayer</option></Select><Caret big /></ComboBox>
          </LayerArea>
        </Group>
        <Group w={59} title="组">
          <BigButton w={38} icon="group" lines={['组']} />
          <Column w={18} items={[{ icon: 'gedit' }, { icon: 'gadd' }, { icon: 'gsel', on: true }]} />
        </Group>
        <Group w={65} title="实用工具">
          <BigButton w={44} icon="measure" lines={['测量']} drop />
          <Column w={18} items={[{ icon: 'quick' }, { icon: 'point' }, { icon: 'calc' }]} />
        </Group>
        <Group w={67} title="剪贴板" plain>
          <BigButton w={45} icon="paste" lines={['粘贴']} drop />
          <Column w={18} items={[{ icon: 'cut' }, { icon: 'copyc' }]} />
        </Group>
        <Group w={52} title="视图" launch>
          <BigButton w={51} icon="base" lines={['基点']} drop />
        </Group>
      </Ribbon>

      <Workspace>
        <Side>
          <SideTitle>T20...</SideTitle>
          {side.map((g, i) => (
            <SideGroup key={i} $h={g.h} $line={g.line}>
              {g.rows.map(([ic, t]) => (
                <SideItem key={t}><SideBtn><Slot $in={ic.startsWith('tri')}><Icon n={ic} /></Slot>{t}</SideBtn></SideItem>
              ))}
            </SideGroup>
          ))}
        </Side>
        <Canvas>
          <Drawing aria-label="立面图">
            <path d="M0 658.500h1526" stroke="#b4b4b4" />
            <rect x="465.500" y="69.500" width="408" height="589" fill="none" stroke="#fff" strokeWidth="3" />
            <g fill="none" stroke="#1fb0b0">
              <path d="M593.500 162.500h66v62h-66z" />
              <path d="M595.500 164.500h30v58h-30zM628.500 164.500h29v58h-29z" />
              <path d="M626.500 162.500v62" />
            </g>
            <g fill="none" stroke="#c8c8c8">
              <path d="M19.500 686v39M23 729.500h40M15.500 725.500h8v8h-8z" />
              <path d="M20 671l5 5.500 5-5.500M25 676.500v5.500M66 717l11 11M77 717l-11 11" />
            </g>
          </Drawing>
          <ViewLabel>[−][俯视][二维线框]</ViewLabel>
          <Compass width="120" height="126" viewBox="-2 -1 120 126" aria-label="视图方位">
            <circle cx="57.500" cy="60" r="46.500" fill="none" stroke="#303030" strokeWidth="11" />
            <path d="M36 38h44v45H36z" fill="#b3b5b3" />
            <path d="M44 47h27v27H44z" fill="#9fa8ab" />
            <path d="M56.500 50v18" stroke="#3c454c" strokeWidth="3" />
            <path d="M58 57.500h10M45 68.500h25" stroke="#3c454c" />
            <g fontSize="16" fill="#a8a8a8" textAnchor="middle" fontFamily="Noto Sans CJK SC">
              <text x="57.500" y="19">北</text><text x="57.500" y="116">南</text>
              <text x="9" y="67">西</text><text x="106" y="67">东</text>
            </g>
          </Compass>
          <Wcs>WCS</Wcs>
          <NavBar width="28" height="183" viewBox="0 0 28 183" aria-label="导航栏">
            <rect width="28" height="183" rx="3" fill="#404040" />
            <path d="M0 49.500h28M0 141.500h28" stroke="#4c4c4c" />
            <g fill="none" stroke="#1f1f1f">
              <circle cx="22.500" cy="4" r="3" /><circle cx="22.500" cy="178" r="3" />
              <circle cx="14" cy="26" r="9" /><circle cx="14" cy="26" r="5" /><path d="M14 17h9v9M17 29l4 4" />
              <path d="M9 72q-6-7-4-8 2 0 4 3l-2-9q1-2 3 0l1 5 0-7q2-2 3 0v7l2-6q2-1 2 1l-1 6 3-4q2 0 1 2l-4 10z" />
              <path d="M5 78l12 12M17 78L5 90M5 82v-4h4M13 78h4v4M5 86v4h4" /><circle cx="17.500" cy="90" r="4" /><path d="M20 93l4 4" strokeWidth="2" />
              <ellipse cx="14" cy="120" rx="9" ry="4" /><path d="M12 112h4v16h-4zM11 113l3-4 3 4M7 118l4 3-4 3" />
              <path d="M5 147h5v5H5zM12 147h5v5h-5zM19 147h5v5h-5zM5 155h13v11H5z" /><path d="M9 157l6 3.500-6 3.500z" fill="#1f1f1f" />
            </g>
            <path d="M13 43h4l-2 2zM13 103h4l-2 2zM13 136h4l-2 2z" fill="#222" />
          </NavBar>

          <Dialog>
            <DlgTitle><Grip /><button type="button" aria-label="关闭"><Svg width="9" height="9"><path d="M1 1l6 6M7 1L1 7" stroke="#e8e8e8" strokeWidth="1.500" /></Svg></button></DlgTitle>
            <DlgTabs><DlgTab type="button">图块编辑</DlgTab></DlgTabs>
            <DlgBody>
              <div>
                <Box>
                  <Line $pad={12} $gap={34}>
                    <Check><input type="radio" name="mode" defaultChecked />输入尺寸</Check>
                    <Check><input type="radio" name="mode" />输入比例</Check>
                  </Line>
                  <Line $pad={1} $gap={3}>
                    <Field>X:<input defaultValue="1500" /></Field>
                    <Field $focus>Y:<input defaultValue="1400" /></Field>
                    <Field>Z:<input defaultValue="0" /></Field>
                  </Line>
                </Box>
                <Line $pad={25} $gap={14}>
                  <Check><input type="checkbox" defaultChecked />统一比例</Check>
                  <Field><span>转角:</span><input defaultValue="0" /></Field>
                </Line>
              </div>
              <Types>
                <legend>图块类型</legend>
                <Check><input type="radio" name="kind" /><span><small>ACAD</small>图块</span></Check>
                <Check><input type="radio" name="kind" defaultChecked />天正图块</Check>
              </Types>
            </DlgBody>
          </Dialog>

          <CommandBar>
            <CommandGrip>
              <Svg width="4" height="14"><path d="M1 0v14M3 0v14" stroke="#999" strokeDasharray="1 1" /></Svg>
              <Svg width="8" height="8"><path d="M1 1l6 6M7 1L1 7" stroke="#ddd" strokeWidth="1.500" /></Svg>
              <Svg width="12" height="12"><path d="M4 4l7 7" stroke="#ddd" strokeWidth="2.200" /><path d="M1 3l2 2.500 2.500-.5L5 2.500 3 1a3.500 3.500 0 1 1-2 2z" fill="#ddd" /></Svg>
            </CommandGrip>
            <CommandText>
              <Svg width="12" height="12"><path d="M0 0h12v12H0z" fill="#7d8490" /><path d="M2 3l4 3-4 3M6 9.500h4" stroke="#eee" fill="none" /></Svg>
              <Svg width="4" height="3"><path d="M0 0h4L2 3z" fill="#444" /></Svg>
              <span>点取插入点<Latin>[</Latin></span>
              {options.map(([t, p, k]) => <Opt key={k}>{t}<Latin>{p}<b>{k}</b>)</Latin></Opt>)}
              <span><Latin>]&lt;</Latin>退出<Latin>&gt;:</Latin></span>
            </CommandText>
          </CommandBar>
        </Canvas>
      </Workspace>

      <LayoutTabs>
        <LayoutTab $w={45} $on>模型</LayoutTab>
        <LayoutTab $w={45}>布局1</LayoutTab>
        <LayoutTab $w={45}>布局2</LayoutTab>
        <LayoutTab $w={22} aria-label="新建布局">+</LayoutTab>
      </LayoutTabs>
      <StatusBar>
        <Cell $w={62}><StatusBtn $w={60}>比例 1:100<Caret big /></StatusBtn></Cell>
        <Cell $w={121}><Coords>43407, 27966, 0</Coords></Cell>
        <Cell $w={25} $gap><StatusBtn $w={24}>模型</StatusBtn></Cell>
        {renderCells(Cells)}
        <Cell $w={127} $gap>
          <StatusBtn $w={20}><Icon n="man1" /></StatusBtn><StatusBtn $w={21}><Icon n="man2" /></StatusBtn><StatusBtn $w={20}><Icon n="man3" /></StatusBtn>
          <StatusBtn $w={64}>1:1 / 100%<Caret big /></StatusBtn>
        </Cell>
        {renderCells(Cells2)}
        <Cell $w={83} $gap>
          <StatusBtn $w={18}><Icon n="ruler" /></StatusBtn><StatusBtn $w={32}>小数</StatusBtn>
          <Coords /><StatusBtn $w={12} aria-label="单位"><Caret big /></StatusBtn>
        </Cell>
        {renderCells(Cells3)}
      </StatusBar>

      <Watermark>
        <Svg width="68" height="92" viewBox="0 0 68 92" aria-hidden="true">
          <path d="M5 13l5 1 7-2 3 5 8 7-9 2c-3 5-1 13 5 19 9 6 24 5 33 11l4 6-3 7c4 6 6 12 4 23h-6l-1-15-4 15h-6l2-17-5-11c-10 2-15 2-21 1l-3 9-1 18H9l2-17-1-14C3 52 0 45 1 37c2-7 9-10 9-15z" fill="#d6d6d6" />
          <g fill="none" stroke="#d6d6d6" strokeWidth="2" strokeLinecap="round">
            <path d="M19 14q6-6 14-4 8 4 17 2 8 0 16-8" /><path d="M22 11q-4-4-2-7M26 9q-2-4 1-7M31 9q6-2 5-8M37 11l11-3M50 12l2-5M27 13q10 7 25 3" />
          </g>
        </Svg>
        <Brand>
          <BrandTop><span>3D</span>溜溜网</BrandTop>
          <BrandUrl>3D66.COM</BrandUrl>
        </Brand>
      </Watermark>
    </Page>
  );
}
